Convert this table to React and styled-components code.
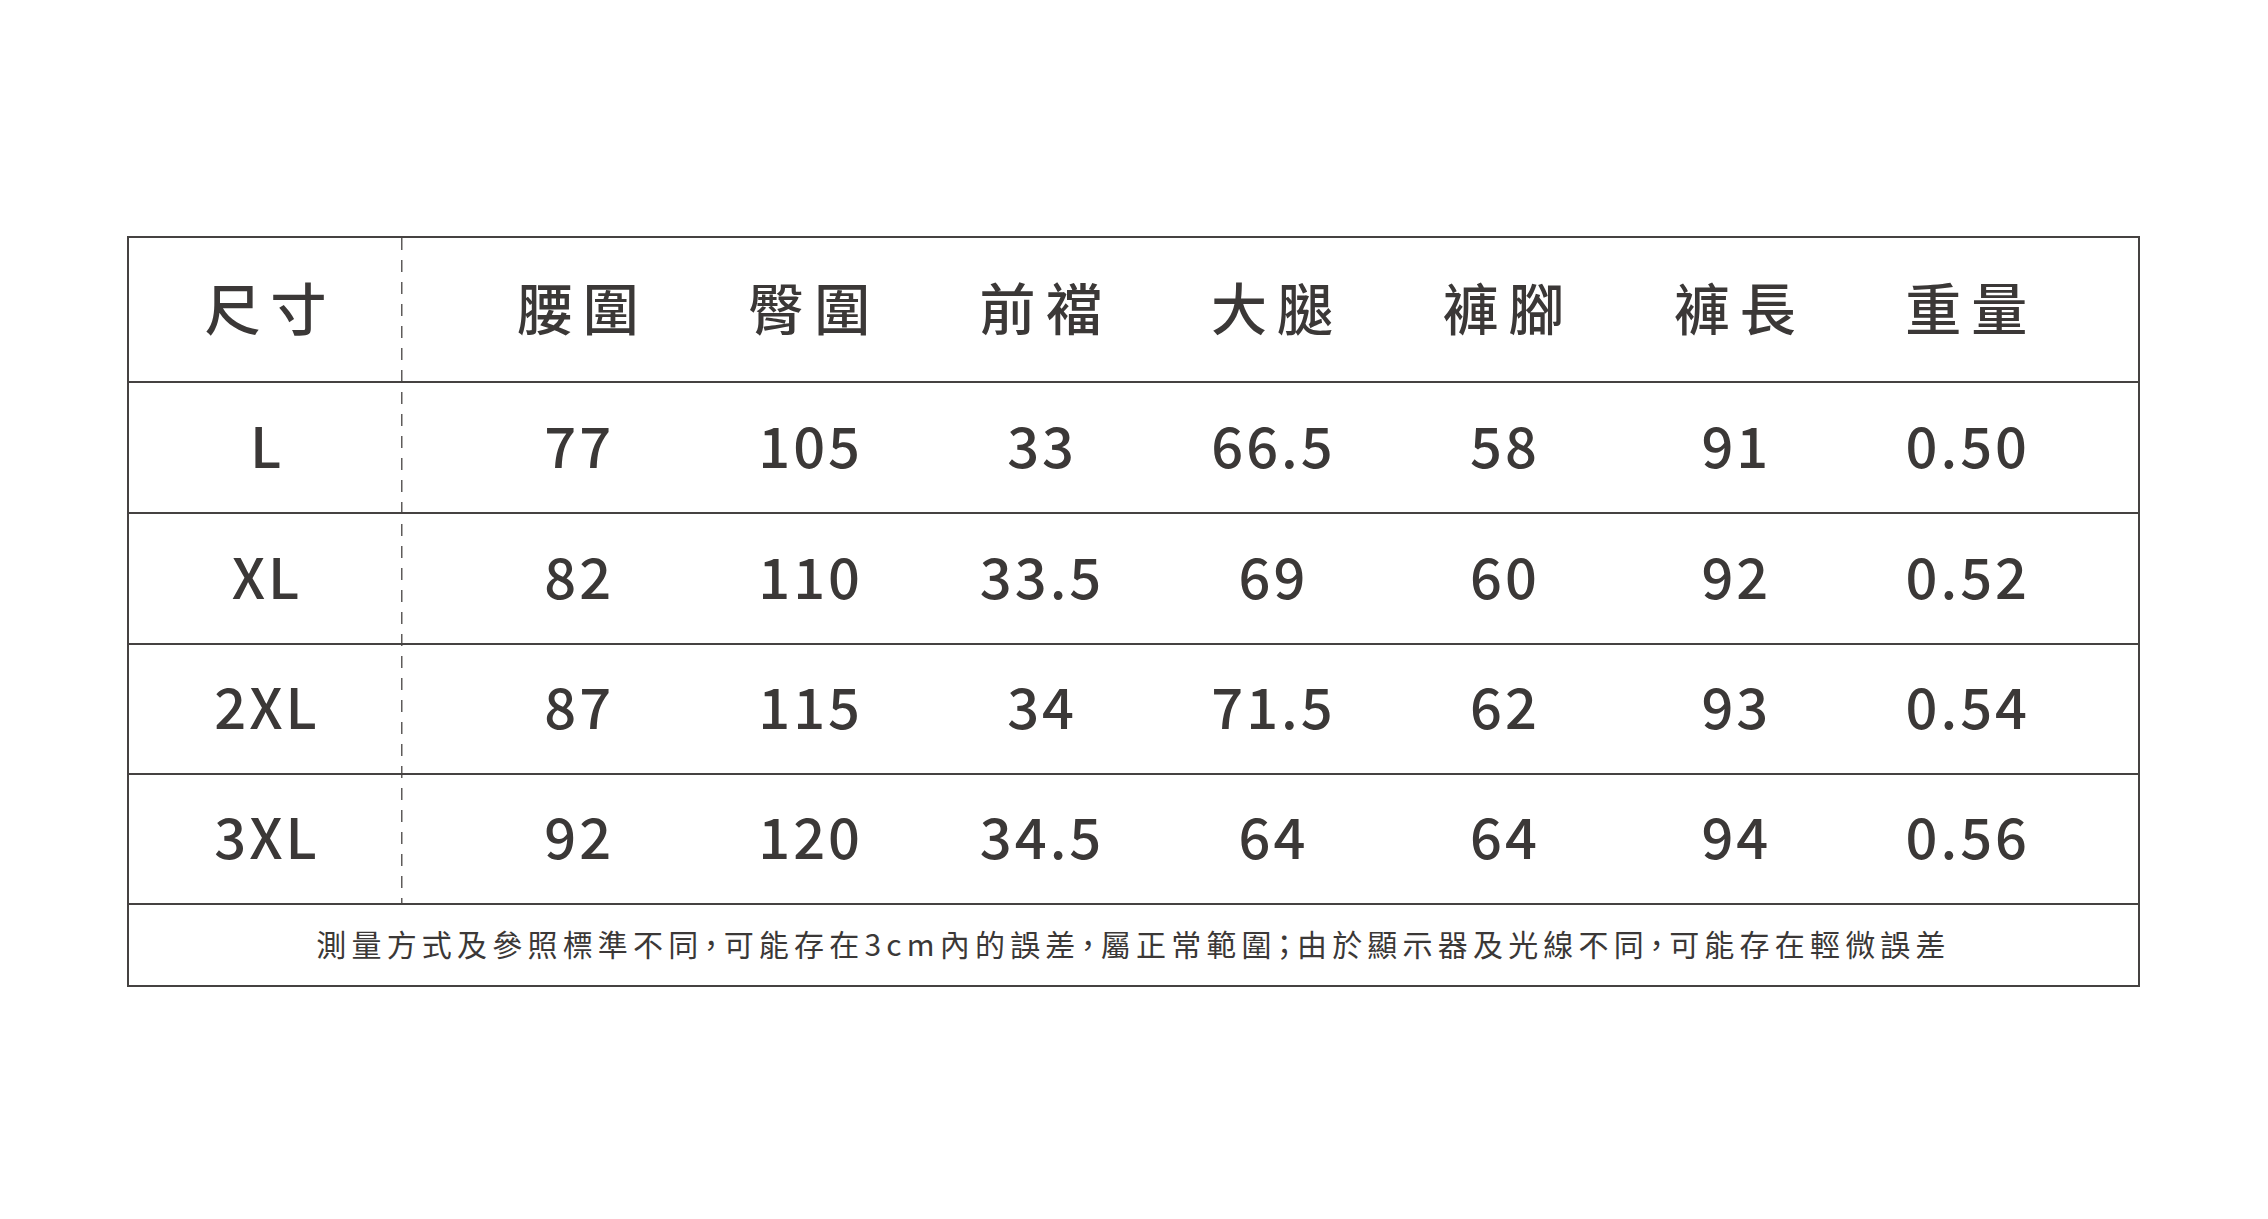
import React from 'react';
import styled, { createGlobalStyle } from 'styled-components';

const GlobalStyle = createGlobalStyle`
	html, body {
		margin: 0;
		padding: 0;
		background: #ffffff;
	}
	body {
		font-family: "Noto Sans CJK TC", "Noto Sans CJK JP", sans-serif;
		color: #3b3837;
	}
`;

const Page = styled.div`
	width: 2268px;
	height: 1219px;
	padding: 236px 0 0 127px;
	box-sizing: border-box;
`;

const Table = styled.div`
	width: 2013px;
	border: 2px solid #454241;
	box-sizing: border-box;
`;

// the dashed divider after the size column runs through every row but the note
const Body = styled.div`
	background-image: repeating-linear-gradient(
		to bottom,
		#5e5b5a 0px,
		#5e5b5a 12px,
		transparent 12px,
		transparent 22px
	);
	background-position: 272px 0;
	background-size: 1.5px 100%;
	background-repeat: no-repeat;
`;

const Row = styled.div`
	display: flex;
	height: ${(p) => p.$h}px;
	border-bottom: 2px solid #454241;
	box-sizing: border-box;
`;

const SizeCell = styled.div`
	width: 273px;
	display: flex;
	align-items: center;
	justify-content: center;
`;

const Values = styled.div`
	flex: 1;
	display: grid;
	grid-template-columns: repeat(7, 1fr);
	padding: 0 56px 0 60px;
`;

const Cell = styled.div`
	display: flex;
	align-items: center;
	justify-content: center;
`;

const Label = styled.span`
	font-size: 56px;
	font-weight: 500;
	letter-spacing: 10px;
	margin: 0 -10px 8px 0;
	line-height: 1;
`;

const Value = styled.span`
	font-size: 56px;
	font-weight: 500;
	letter-spacing: 3px;
	margin: 0 -3px 8px 0;
	line-height: 1;
`;

const Note = styled.div`
	height: 80px;
	padding-bottom: 4px;
	box-sizing: border-box;
	display: flex;
	align-items: center;
	justify-content: center;
	font-size: 30px;
	letter-spacing: 5.2px;
	font-feature-settings: "halt";
	line-height: 1;
`;

const headers = ['腰圍', '臀圍', '前襠', '大腿', '褲腳', '褲長', '重量'];

const rows = [
	{ h: 131, cells: ['L', '77', '105', '33', '66.5', '58', '91', '0.50'] },
	{ h: 131, cells: ['XL', '82', '110', '33.5', '69', '60', '92', '0.52'] },
	{ h: 130, cells: ['2XL', '87', '115', '34', '71.5', '62', '93', '0.54'] },
	{ h: 130, cells: ['3XL', '92', '120', '34.5', '64', '64', '94', '0.56'] },
];

export default function App() {
	return (
		<>
			<GlobalStyle />
			<Page>
				<Table>
					<Body>
						<Row $h={145}>
							<SizeCell>
								<Label>尺寸</Label>
							</SizeCell>
							<Values>
								{headers.map((h) => (
									<Cell key={h}>
										<Label>{h}</Label>
									</Cell>
								))}
							</Values>
						</Row>
						{rows.map(({ h, cells: [size, ...vals] }) => (
							<Row key={size} $h={h}>
								<SizeCell>
									<Value>{size}</Value>
								</SizeCell>
								<Values>
									{vals.map((v, i) => (
										<Cell key={i}>
											<Value>{v}</Value>
										</Cell>
									))}
								</Values>
							</Row>
						))}
					</Body>
					<Note>
						測量方式及參照標準不同，可能存在3cm內的誤差，屬正常範圍；由於顯示器及光線不同，可能存在輕微誤差
					</Note>
				</Table>
			</Page>
		</>
	);
}
